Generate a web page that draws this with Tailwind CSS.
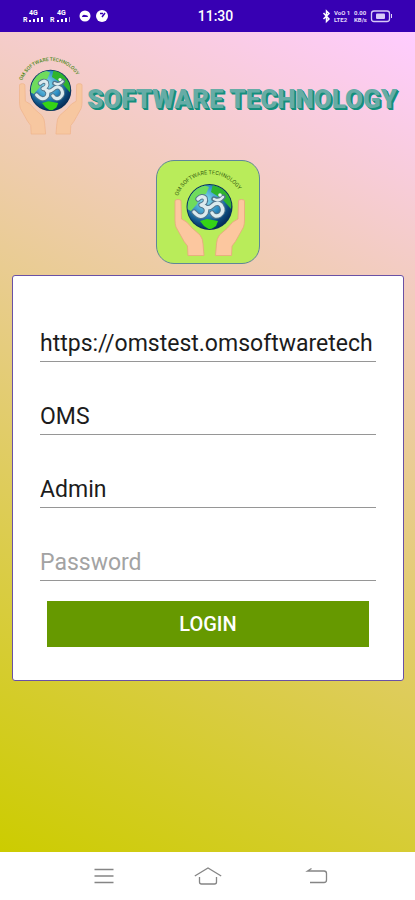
<!DOCTYPE html>
<html lang="en">
<head>
<meta charset="utf-8">
<meta name="viewport" content="width=device-width, initial-scale=1">
<title>OM Software Technology</title>
<script src="https://cdn.jsdelivr.net/npm/@tailwindcss/browser@4"></script>
</head>
<body class="flex min-h-screen flex-col bg-white font-['Roboto',sans-serif]">

<!-- Shared emblem: globe held by two hands -->
<svg class="absolute h-0 w-0" aria-hidden="true">
  <defs>
    <radialGradient id="sea" cx="0.4" cy="0.35" r="0.68">
      <stop offset="0" stop-color="#8fe4f2"/>
      <stop offset="0.5" stop-color="#2f8fc4"/>
      <stop offset="0.8" stop-color="#0c4a7c"/>
      <stop offset="1" stop-color="#052c58"/>
    </radialGradient>
    <clipPath id="disc"><circle cx="39.5" cy="36" r="22"/></clipPath>
    <path id="arc" d="M8 25 A34 34 0 0 1 71.500 25"/>
    <path id="hand" d="M5 30 Q5 28.500 8 28.500 T11 30 L11.500 48 Q17 50 22 57 L30 64 Q33 68 33 73 L34 84.500 H18 L17.500 75 Q14 71 11 65 L6 56 Q5 53 5 49 Z"/>
    <g id="globe">
      <circle cx="39.500" cy="36" r="23" fill="#08305c"/>
      <circle cx="39.500" cy="36" r="22" fill="url(#sea)"/>
      <g clip-path="url(#disc)">
        <path d="M17 38 Q18 21 31 13 L39 16 L36 23 L30 25 L27 33 L21 40 Z" fill="#6fdc5c"/>
        <path d="M43 13 L55 15 L63 28 L61 38 L54 30 L49 26 L41 21 Z" fill="#2fb52c"/>
        <path d="M30 50 L37 48 L48 50 L46 55 L40 59 L34 55 Z" fill="#35d415"/>
      </g>
      <g fill="none" stroke-linecap="round" stroke-linejoin="round">
        <g stroke="#52758c" stroke-width="5.400">
          <path d="M28 28 Q32 24 35 27 Q37 32 31 34 Q38 35 36 42 Q31 49 24 41"/>
          <path d="M35 36 Q39 38 42 35 Q47 30 51 34 Q55 40 50 44 Q45 47 42 42"/>
          <path d="M44 28 Q49 31 53 26"/>
        </g>
        <g stroke="#dcebee" stroke-width="3.400">
          <path d="M28 28 Q32 24 35 27 Q37 32 31 34 Q38 35 36 42 Q31 49 24 41"/>
          <path d="M35 36 Q39 38 42 35 Q47 30 51 34 Q55 40 50 44 Q45 47 42 42"/>
          <path d="M44 28 Q49 31 53 26" stroke-width="2.500"/>
        </g>
      </g>
      <circle cx="50" cy="24" r="1.800" fill="#e8f3f5"/>
    </g>
  </defs>
</svg>

<header class="flex h-8 items-center justify-between bg-[#3700b3] pr-[22px] pl-[23px] text-white">
  <svg class="h-4 w-[86px]" viewBox="0 0 86 16" fill="#fff" role="img" aria-label="Network status">
    <g font-family="Roboto, sans-serif" font-weight="700">
      <text x="6" y="7" font-size="7">4G</text><text x="0" y="14" font-size="7">R</text>
      <text x="34" y="7" font-size="7">4G</text><text x="27" y="14" font-size="7">R</text>
    </g>
    <path d="M6 12h2v2H6zM10 11h2v3h-2zM14 10h2v4h-2zM18 9h2v5h-2zM34 12h2v2h-2zM38 11h2v3h-2zM42 10h2v4h-2z"/>
    <path d="M46 9h1v5h-1z" opacity=".6"/>
    <circle cx="62" cy="8" r="5.500"/><path d="M59 8.500 Q60 6 62 7 Q65 7 65 9 H59Z" fill="#3700b3"/>
    <circle cx="79" cy="8" r="6"/><path d="M79 9 L82 5 M77 5.500 H80" stroke="#3700b3" stroke-width="1.500"/>
  </svg>
  <time class="text-sm font-medium">11:30</time>
  <svg class="h-4 w-[71px]" viewBox="0 0 71 16" fill="#e4dafa" role="img" aria-label="Bluetooth, data speed and battery">
    <path d="M1.500 5 L7 11 L4.500 13.500 V3 L7 5.500 L1.500 11" fill="none" stroke="#fff" stroke-width="1.500"/>
    <g font-family="Roboto, sans-serif" font-weight="700" font-size="6">
      <text x="12" y="7">VoO 1</text><text x="12" y="14">LTE2</text>
      <text x="32" y="7">0.00</text><text x="32" y="14">KB/s</text>
    </g>
    <rect x="49.500" y="3" width="18" height="10.500" rx="2.500" fill="none" stroke="#d7c9f7" stroke-width="1.300"/>
    <rect x="54" y="5.500" width="9" height="5.500" rx="1" fill="#d7c9f7"/>
    <path d="M69 6h1v4h-1z"/>
  </svg>
</header>

<main class="flex flex-1 flex-col items-center bg-[linear-gradient(27deg,#cccc00,#ffccff)] pr-[11px] pl-3">
  <div class="mt-[26px] flex w-full items-center pl-[3px]">
    <svg class="h-[81px] w-[72px] shrink-0 overflow-visible" viewBox="0 0 80 90" role="img" aria-label="OM Software Technology logo">
      <text font-family="Roboto, sans-serif" font-weight="500" font-size="5.500" fill="#4f8a20"><textPath href="#arc">OM SOFTWARE TECHNOLOGY</textPath></text>
      <g fill="#f7c7a0" stroke="#efb48c" stroke-width=".8">
        <use href="#hand"/><use href="#hand" transform="translate(79.500 0) scale(-1 1)"/>
      </g>
      <use href="#globe"/>
    </svg>
    <h1 class="flex-1 text-[26px] leading-8 font-black whitespace-nowrap text-[#66aca6] [text-shadow:1px_1px_0_#148f7d,2px_2px_0_#148f7d]">SOFTWARE TECHNOLOGY</h1>
  </div>

  <div class="mt-[21px] flex size-[104px] items-center justify-center rounded-[18px] border border-[#5f8798] bg-[#b9ec5a] pt-2 pl-1">
    <svg class="h-[90px] w-20 overflow-visible" viewBox="0 0 80 90" role="img" aria-label="OM Software Technology app icon">
      <text font-family="Roboto, sans-serif" font-size="5.500" fill="#35610f"><textPath href="#arc">OM SOFTWARE TECHNOLOGY</textPath></text>
      <g fill="#fcc79f" stroke="#e9a67f" stroke-width=".8">
        <use href="#hand"/><use href="#hand" transform="translate(79.500 0) scale(-1 1)"/>
      </g>
      <use href="#globe"/>
    </svg>
  </div>

  <form class="mt-[11px] flex w-full flex-col gap-5 rounded-[3px] border border-[#6a51a5] bg-white px-[27px] pt-[46px] pb-[33px] text-[23px] text-[#1c1c1c]">
    <div class="flex flex-col gap-[33px]">
      <input type="text" aria-label="Server URL" value="https://omstest.omsoftwaretech" class="h-10 w-full border-b border-[#969696] pt-1 outline-none">
      <input type="text" aria-label="Company" value="OMS" class="h-10 w-full border-b border-[#969696] pt-1 outline-none">
      <input type="text" aria-label="User name" value="Admin" class="h-10 w-full border-b border-[#969696] pt-1 outline-none">
      <input type="password" aria-label="Password" placeholder="Password" class="h-10 w-full border-b border-[#969696] pt-1 outline-none placeholder:text-[#a3a3a3]">
    </div>
    <button type="submit" class="mx-[7px] h-[46px] bg-[#669900] text-xl font-medium text-white">LOGIN</button>
  </form>
</main>

<nav class="flex h-12 items-center justify-center gap-[80px] bg-white text-[#858585]">
  <button type="button" aria-label="Recent apps">
    <svg class="h-6 w-7" viewBox="0 0 28 24" fill="none" stroke="currentColor" stroke-width="1.300"><path d="M8.500 5.500h19M8.500 12h19M8.500 18.500h19"/></svg>
  </button>
  <button type="button" aria-label="Home">
    <svg class="h-6 w-7" viewBox="0 0 28 24" fill="none" stroke="currentColor" stroke-width="1.300"><path d="M.8 12 L14 4 L27.200 12 M5.500 13 V18 Q5.500 20 7.500 20 H20.500 Q22.500 20 22.500 18 V13"/></svg>
  </button>
  <button type="button" aria-label="Back">
    <svg class="h-6 w-7" viewBox="0 0 28 24" fill="none" stroke="currentColor" stroke-width="1.300"><path d="M9.500 4.500 L5.500 7 H22 Q24.500 7 24.500 9.500 V16 Q24.500 18.500 22 18.500 H8"/></svg>
  </button>
</nav>
</body>
</html>
